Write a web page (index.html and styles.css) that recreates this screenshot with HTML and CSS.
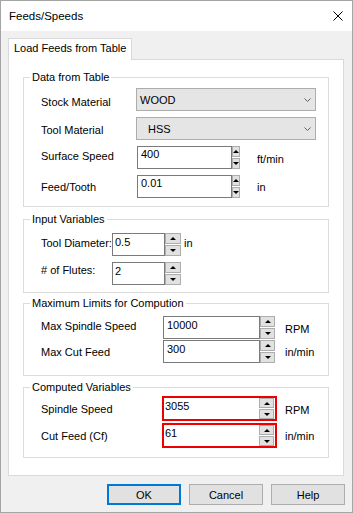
FILE: index.html
```html
<!DOCTYPE html>
<html lang="en">
<head>
  <meta charset="UTF-8">
  <meta name="viewport" content="width=device-width, initial-scale=1.0">
  <title>Feeds/Speeds</title>
  <link rel="stylesheet" href="styles.css">
</head>
<body>
  <div class="window">
    <div class="titlebar">
      <span class="title">Feeds/Speeds</span>
      <svg class="close" width="10" height="10" viewBox="0 0 10 10">
        <path d="M0.5 0.5 L9.5 9.5 M9.5 0.5 L0.5 9.5" stroke="#000" stroke-width="1" fill="none"/>
      </svg>
    </div>

    <div class="tab">Load Feeds from Table</div>
    <div class="panel">

      <!-- Data from Table -->
      <div class="group g-data">
        <div class="legend">Data from Table</div>
        <div class="row">
          <span class="lbl lo2">Stock Material</span>
          <div class="combo">
            <span class="combo-text">WOOD</span>
            <svg class="chev" width="7" height="4" viewBox="0 0 7 4"><polyline points="0.5,0.5 3.5,3.5 6.5,0.5" fill="none" stroke="#606060"/></svg>
          </div>
        </div>
        <div class="row">
          <span class="lbl lo">Tool Material</span>
          <div class="combo">
            <span class="combo-text indent">HSS</span>
            <svg class="chev" width="7" height="4" viewBox="0 0 7 4"><polyline points="0.5,0.5 3.5,3.5 6.5,0.5" fill="none" stroke="#606060"/></svg>
          </div>
        </div>
        <div class="row">
          <span class="lbl hi">Surface Speed</span>
          <div class="spin">
            <div class="edit">400</div>
            <div class="updown"><span class="up"></span><span class="down"></span></div>
          </div>
          <span class="unit lo">ft/min</span>
        </div>
        <div class="row">
          <span class="lbl">Feed/Tooth</span>
          <div class="spin">
            <div class="edit">0.01</div>
            <div class="updown"><span class="up"></span><span class="down"></span></div>
          </div>
          <span class="unit">in</span>
        </div>
      </div>

      <!-- Input Variables -->
      <div class="group g-input">
        <div class="legend">Input Variables</div>
        <div class="row">
          <span class="lbl hi">Tool Diameter:</span>
          <div class="spin">
            <div class="edit">0.5</div>
            <div class="updown"><span class="up"></span><span class="down"></span></div>
          </div>
          <span class="unit hi">in</span>
        </div>
        <div class="row">
          <span class="lbl hi2"># of Flutes:</span>
          <div class="spin">
            <div class="edit">2</div>
            <div class="updown"><span class="up"></span><span class="down"></span></div>
          </div>
        </div>
      </div>

      <!-- Maximum Limits -->
      <div class="group g-limits">
        <div class="legend">Maximum Limits for Compution</div>
        <div class="row">
          <span class="lbl hi">Max Spindle Speed</span>
          <div class="spin">
            <div class="edit">10000</div>
            <div class="updown"><span class="up"></span><span class="down"></span></div>
          </div>
          <span class="unit lo">RPM</span>
        </div>
        <div class="row">
          <span class="lbl">Max Cut Feed</span>
          <div class="spin">
            <div class="edit">300</div>
            <div class="updown"><span class="up"></span><span class="down"></span></div>
          </div>
          <span class="unit">in/min</span>
        </div>
      </div>

      <!-- Computed Variables -->
      <div class="group g-computed">
        <div class="legend">Computed Variables</div>
        <div class="row">
          <span class="lbl">Spindle Speed</span>
          <div class="spin flagged">
            <div class="edit">3055</div>
            <div class="updown"><span class="up"></span><span class="down"></span></div>
          </div>
          <span class="unit lo">RPM</span>
        </div>
        <div class="row">
          <span class="lbl">Cut Feed (Cf)</span>
          <div class="spin flagged">
            <div class="edit">61</div>
            <div class="updown"><span class="up"></span><span class="down"></span></div>
          </div>
          <span class="unit">in/min</span>
        </div>
      </div>

    </div>

    <div class="buttons">
      <button class="btn default">OK</button>
      <button class="btn">Cancel</button>
      <button class="btn">Help</button>
    </div>
  </div>
</body>
</html>
```

FILE: styles.css
```css
* {
  box-sizing: border-box;
}
html, body {
  margin: 0;
  padding: 0;
}
body {
  font-family: "Liberation Sans", Arial, sans-serif;
  font-size: 11px;
  color: #000;
  background: #f0f0f0;
}

.window {
  width: 353px;
  height: 513px;
  border: 1px solid #a5a5a5;
  background: #f0f0f0;
}

/* title bar */
.titlebar {
  height: 30px;
  background: #fff;
  display: flex;
  align-items: center;
  justify-content: space-between;
  padding: 0 9px 0 8px;
}
.title {
  font-size: 11.5px;
}
.close {
  display: block;
}

/* tab + page */
.tab {
  position: relative;
  z-index: 1;
  width: 124px;
  height: 22px;
  margin: 7px 0 -1px 7px;
  padding: 3px 0 0 5px;
  line-height: 13px;
  background: #fff;
  border: 1px solid #d9d9d9;
  border-bottom: none;
}
.panel {
  width: 336px;
  height: 417px;
  margin-left: 7px;
  padding: 17px 0 0 14px;
  background: #fff;
  border: 1px solid #d9d9d9;
}

/* group boxes */
.group {
  position: relative;
  width: 306px;
  border: 1px solid #dcdcdc;
  padding-left: 17px;
  display: flex;
  flex-direction: column;
}
.legend {
  position: absolute;
  top: -7px;
  left: 6px;
  padding: 0 2px;
  line-height: 13px;
  background: #fff;
}
.g-data {
  padding-top: 7px;
  padding-bottom: 5px;
}
.g-data .row {
  height: 29px;
}
.g-input {
  margin-top: 12px;
  padding-top: 13px;
  padding-bottom: 7px;
  gap: 6px;
}
.g-limits {
  margin-top: 10px;
  padding-top: 12px;
  padding-bottom: 12px;
  gap: 1px;
}
.g-computed {
  margin-top: 11px;
  padding-top: 8px;
  padding-bottom: 9px;
  gap: 2px;
}

.row {
  display: flex;
  align-items: center;
}
.lbl {
  flex: none;
}
.g-data .lbl { width: 95px; }
.g-input .lbl { width: 71px; }
.g-limits .lbl { width: 122px; }
.g-computed .lbl { width: 121px; }

/* small vertical nudges for static text */
.lo { padding-top: 3px; }
.lo2 { padding-top: 5px; }
.hi { padding-bottom: 3px; }
.hi2 { padding-bottom: 7px; }

/* combo box */
.combo {
  width: 180px;
  height: 23px;
  display: flex;
  align-items: center;
  justify-content: space-between;
  padding: 0 4px 0 3px;
  background: #e5e5e5;
  border: 1px solid #adadad;
}
.combo-text.indent {
  padding-left: 8px;
}
.chev {
  display: block;
}

/* edit + up/down */
.spin {
  display: flex;
  height: 23px;
}
.edit {
  height: 23px;
  padding: 2px 0 0 3px;
  line-height: 13px;
  background: #fff;
  border: 1px solid #7a7a7a;
}
.updown {
  display: flex;
  flex-direction: column;
  gap: 1px;
}
.updown span {
  flex: 1;
  display: flex;
  align-items: center;
  justify-content: center;
  background: #e1e1e1;
  border: 1px solid #adadad;
}
.up::after {
  content: "";
  border-left: 3px solid transparent;
  border-right: 3px solid transparent;
  border-bottom: 3px solid #000;
}
.down::after {
  content: "";
  border-left: 3px solid transparent;
  border-right: 3px solid transparent;
  border-top: 3px solid #000;
}
.unit {
  flex: none;
}

.g-data .spin { margin-left: 1px; }
.g-data .edit { width: 95px; padding-top: 1px; }
.g-data .updown { width: 8px; }
.g-data .unit { margin-left: 17px; }

.g-input .edit { width: 53px; padding-left: 2px; }
.g-input .updown { width: 16px; }
.g-input .unit { margin-left: 3px; }

.g-limits .edit { width: 97px; }
.g-limits .updown { width: 15px; }
.g-limits .unit { margin-left: 10px; }

.spin.flagged {
  width: 115px;
  height: 25px;
  border: 2px solid #ee0000;
}
.flagged .edit {
  flex: 1;
  height: 21px;
  border: none;
  padding: 2px 0 0 1px;
}
.flagged .updown {
  width: 15px;
  margin-right: 1px;
}
.g-computed .unit { margin-left: 8px; }

/* dialog buttons */
.buttons {
  display: flex;
  justify-content: flex-end;
  gap: 8px;
  margin-top: 8px;
  padding-right: 7px;
}
.btn {
  width: 74px;
  height: 21px;
  padding: 0;
  font-family: inherit;
  font-size: 11px;
  color: #000;
  background: #e1e1e1;
  border: 1px solid #adadad;
}
.btn.default {
  border: 2px solid #0078d7;
}
```
